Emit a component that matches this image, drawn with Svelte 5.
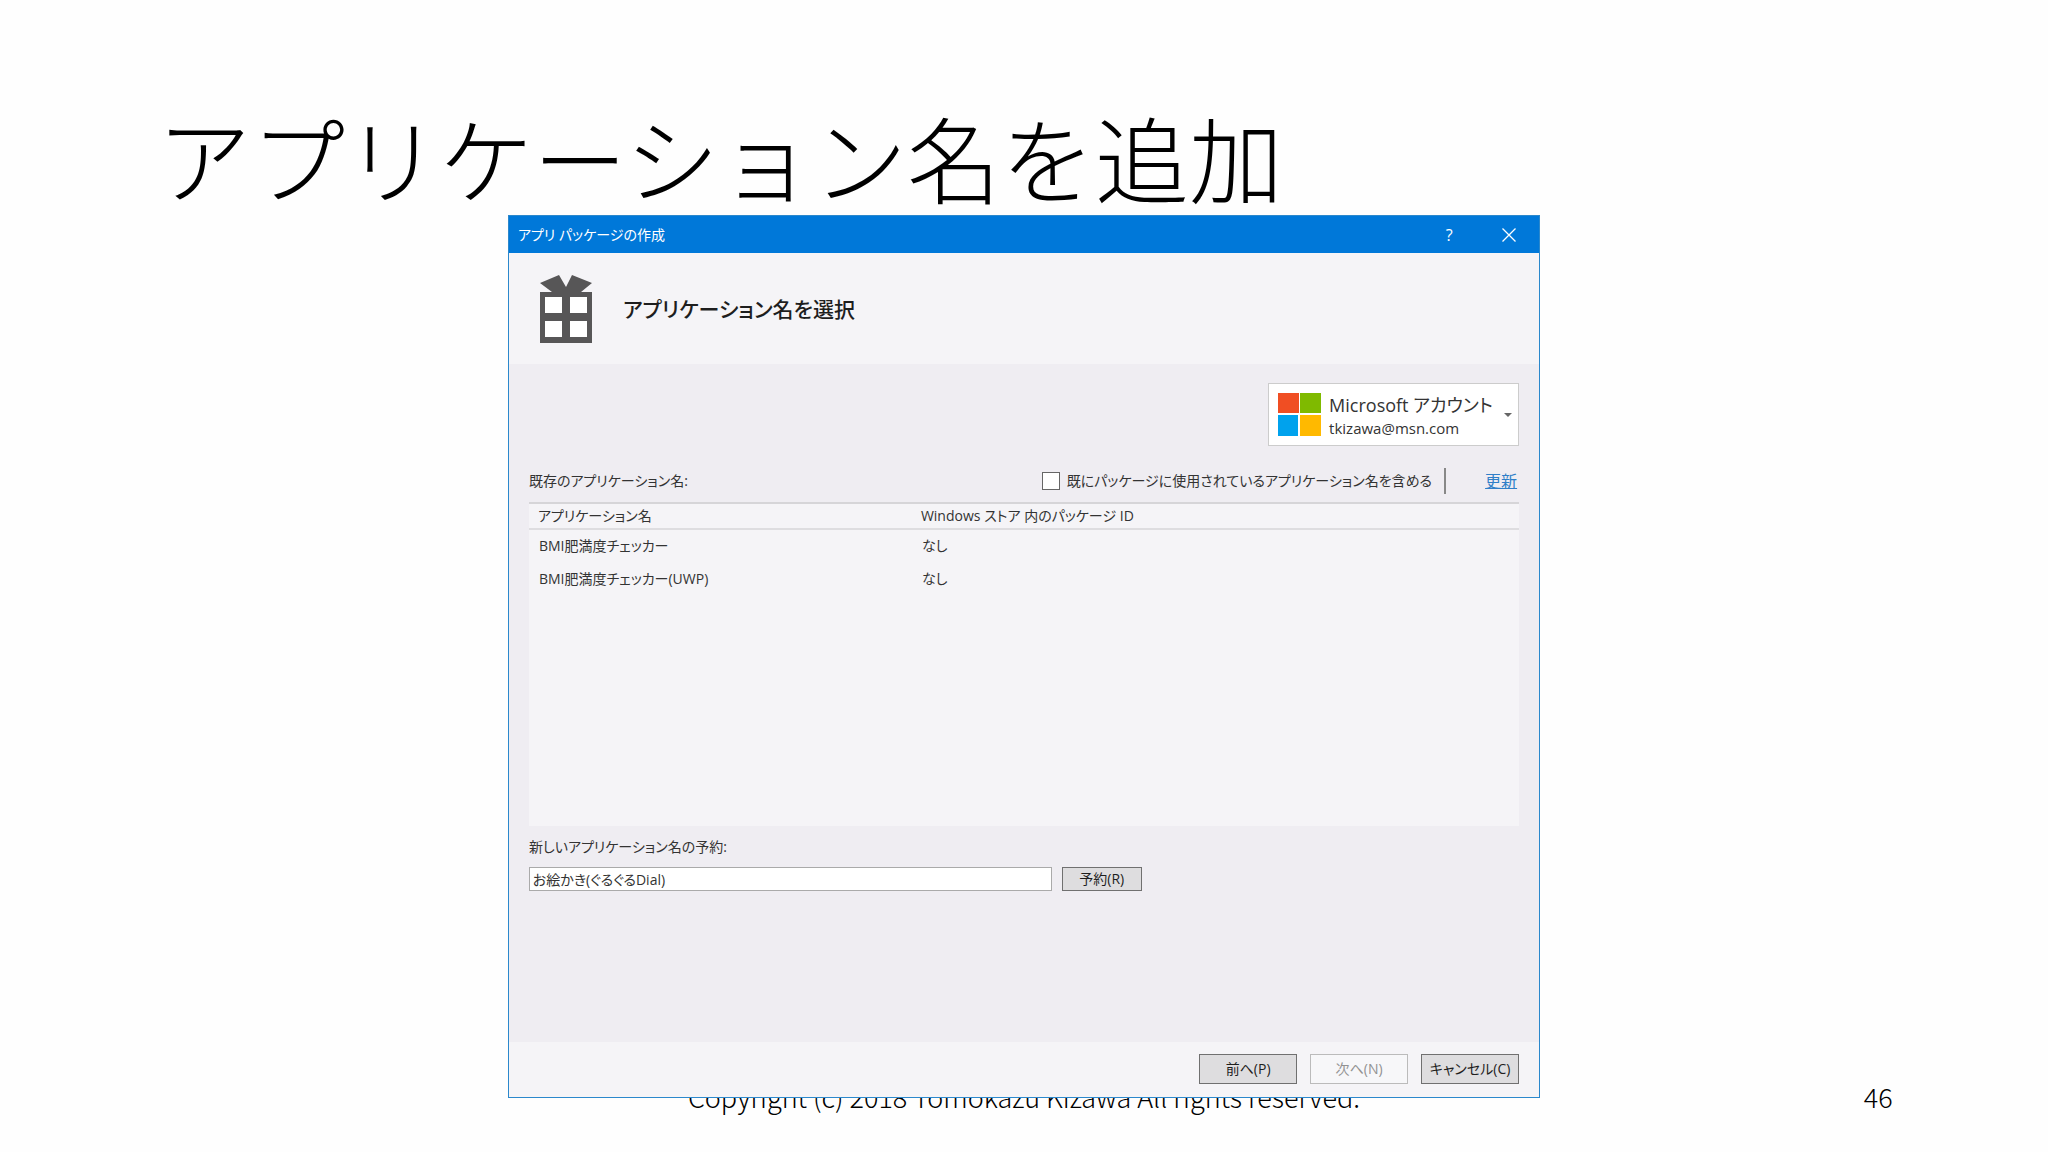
<script lang="ts">
  type AppName = { name: string; packageId: string };

  const appNames: AppName[] = [
    { name: 'BMI肥満度チェッカー', packageId: 'なし' },
    { name: 'BMI肥満度チェッカー(UWP)', packageId: 'なし' },
  ];

  let includeUsed = $state(false);
  let newName = $state('お絵かき(ぐるぐるDial)');
</script>

<main class="slide">
  <h1>アプリケーション名を追加</h1>

  <section class="dialog" aria-labelledby="dialog-title">
    <div class="titlebar">
      <span id="dialog-title">アプリ パッケージの作成</span>
      <div class="window-buttons">
        <button type="button" aria-label="ヘルプ">?</button>
        <button type="button" aria-label="閉じる">
          <svg width="14" height="14" viewBox="0 0 14 14">
            <path d="M.5.5l13 13M13.5.5l-13 13" stroke="#fff" stroke-width="1.3" fill="none" />
          </svg>
        </button>
      </div>
    </div>

    <header>
      <svg class="gift" width="52" height="68" viewBox="0 0 52 68" aria-hidden="true">
        <path
          d="M0 8L19 0L26 12L32 0L52 8L41 17H52V68H0V17H12Z"
          fill="#575657"
        />
        <path d="M5 22h17v16H5zM30 22h17v16H30zM5 46h17v16H5zM30 46h17v16H30z" fill="#fff" />
      </svg>
      <h2>アプリケーション名を選択</h2>
    </header>

    <div class="body">
      <button type="button" class="account" aria-haspopup="listbox">
        <svg class="logo" width="43" height="43" viewBox="0 0 43 43" aria-hidden="true">
          <path d="M0 0h21v20H0z" fill="#f04e23" />
          <path d="M22 0h21v20H22z" fill="#7fba00" />
          <path d="M0 22h20v21H0z" fill="#00a2ed" />
          <path d="M22 22h21v21H22z" fill="#ffb900" />
        </svg>
        <span class="account-text">
          <span class="provider">Microsoft アカウント</span>
          <span class="mail">tkizawa@msn.com</span>
        </span>
        <svg class="arrow" width="8" height="4" viewBox="0 0 8 4" aria-hidden="true">
          <path d="M0 0h8L4 4z" fill="#666" />
        </svg>
      </button>

      <div class="toolbar">
        <span id="list-label">既存のアプリケーション名:</span>
        <label class="include">
          <input type="checkbox" bind:checked={includeUsed} />
          既にパッケージに使用されているアプリケーション名を含める
        </label>
        <a href="#refresh">更新</a>
      </div>

      <div class="list">
        <table aria-labelledby="list-label">
          <thead>
            <tr>
              <th>アプリケーション名</th>
              <th>Windows ストア 内のパッケージ ID</th>
            </tr>
          </thead>
          <tbody>
            {#each appNames as app}
              <tr>
                <td>{app.name}</td>
                <td>{app.packageId}</td>
              </tr>
            {/each}
          </tbody>
        </table>
      </div>

      <label class="reserve-label" for="new-name">新しいアプリケーション名の予約:</label>
      <div class="reserve">
        <input id="new-name" type="text" bind:value={newName} />
        <button type="button" class="push">予約(R)</button>
      </div>
    </div>

    <div class="actions">
      <button type="button" class="push">前へ(P)</button>
      <button type="button" class="push" disabled>次へ(N)</button>
      <button type="button" class="push">キャンセル(C)</button>
    </div>
  </section>

  <footer>
    <p>Copyright (c) 2018 Tomokazu Kizawa All rights reserved.</p>
    <span class="page">46</span>
  </footer>
</main>

<style>
  :global(body) {
    background: #fefefe;
  }

  .slide {
    display: flex;
    flex-direction: column;
    box-sizing: border-box;
    min-height: 100vh;
    padding-top: 98px;
    color: #000;
    font-family: 'Noto Sans CJK JP', sans-serif;
  }

  h1 {
    margin: 0 157px;
    font-size: 94px;
    font-weight: 300;
    line-height: 117px;
  }

  .dialog {
    position: relative;
    box-sizing: border-box;
    width: 50.4%;
    min-width: 900px;
    margin: 0 auto;
    border: 1px solid #2b88cc;
    background: #f5f4f7;
    color: #333;
    font-family: 'Open Sans', 'Noto Sans CJK JP', sans-serif;
    font-feature-settings: 'palt';
    font-size: 14px;
    line-height: 24px;
  }

  button,
  input {
    font: inherit;
    font-feature-settings: inherit;
    color: inherit;
  }

  .titlebar {
    display: flex;
    align-items: center;
    justify-content: space-between;
    height: 37px;
    padding-left: 9px;
    background: #0078d9;
    color: #fff;
  }

  .window-buttons {
    display: flex;
    height: 100%;
  }

  .window-buttons button {
    display: flex;
    align-items: center;
    justify-content: center;
    width: 60px;
    padding: 0;
    border: none;
    background: none;
    font-size: 16px;
  }

  header {
    display: flex;
    align-items: center;
    gap: 31px;
    height: 111px;
    padding-left: 31px;
  }

  h2 {
    margin: 0;
    color: #1e1e1e;
    font-size: 21px;
    font-weight: 500;
    line-height: 32px;
  }

  .body {
    display: flex;
    flex-direction: column;
    padding: 19px 20px 151px;
    background: #efedf2;
  }

  .account {
    display: flex;
    align-items: center;
    align-self: flex-end;
    box-sizing: border-box;
    width: 251px;
    height: 63px;
    padding: 0 6px 0 9px;
    border: 1px solid #ccc;
    background: #fff;
    text-align: left;
  }

  .account-text {
    display: flex;
    flex: 1;
    flex-direction: column;
    margin-left: 8px;
    padding-top: 2px;
    white-space: nowrap;
  }

  .provider {
    font-size: 18px;
    line-height: 24px;
  }

  .mail {
    font-size: 15px;
    line-height: 22px;
  }

  .toolbar {
    display: flex;
    align-items: center;
    height: 26px;
    margin: 22px 0 8px;
  }

  .include {
    display: flex;
    align-items: center;
    gap: 7px;
    height: 26px;
    margin-left: auto;
    padding-right: 12px;
    border-right: 2px solid #888;
  }

  .include input {
    appearance: none;
    box-sizing: border-box;
    width: 18px;
    height: 18px;
    margin: 0;
    border: 1px solid #666;
    background: #fff;
  }

  .include input:checked {
    background: #0078d9;
  }

  a {
    margin: 0 2px 0 39px;
    color: #2f7fc8;
    font-size: 16px;
  }

  .list {
    min-height: 324px;
    background: #f5f4f7;
  }

  table {
    width: 100%;
    border-collapse: collapse;
    table-layout: fixed;
  }

  th,
  td {
    padding: 0 9px;
    font-weight: 400;
    text-align: left;
  }

  th {
    height: 22px;
    border-top: 2px solid #d6d5d8;
    border-bottom: 2px solid #dedde0;
  }

  th:first-child {
    width: 365px;
  }

  td {
    height: 32px;
    padding: 0 10px 1px;
  }

  .reserve-label {
    margin-top: 9px;
  }

  .reserve {
    display: flex;
    gap: 10px;
    margin-top: 8px;
  }

  .reserve input {
    box-sizing: border-box;
    width: 52.8%;
    height: 24px;
    padding: 0 3px;
    border: 1px solid #aaa;
    background: #fff;
    line-height: 20px;
  }

  .push {
    box-sizing: border-box;
    height: 24px;
    padding: 0;
    border: 1px solid #707070;
    background: #dedddf;
    color: #1e1e1e;
    line-height: 20px;
    white-space: nowrap;
  }

  .reserve .push {
    width: 80px;
  }

  .actions {
    display: flex;
    gap: 13px;
    justify-content: flex-end;
    padding: 12px 20px 13px;
  }

  .actions .push {
    width: 98px;
    height: 30px;
  }

  .push:disabled {
    border-color: #bbb;
    background: #f7f7f9;
    color: #929292;
  }

  footer {
    display: grid;
    grid-template-columns: 1fr auto 1fr;
    align-items: center;
    margin: -19px 7% 0;
    font-size: 27px;
    font-weight: 300;
    line-height: 36px;
  }

  footer p {
    grid-column: 2;
    margin: 0;
  }

  .page {
    margin-right: 12px;
    text-align: right;
  }
</style>
